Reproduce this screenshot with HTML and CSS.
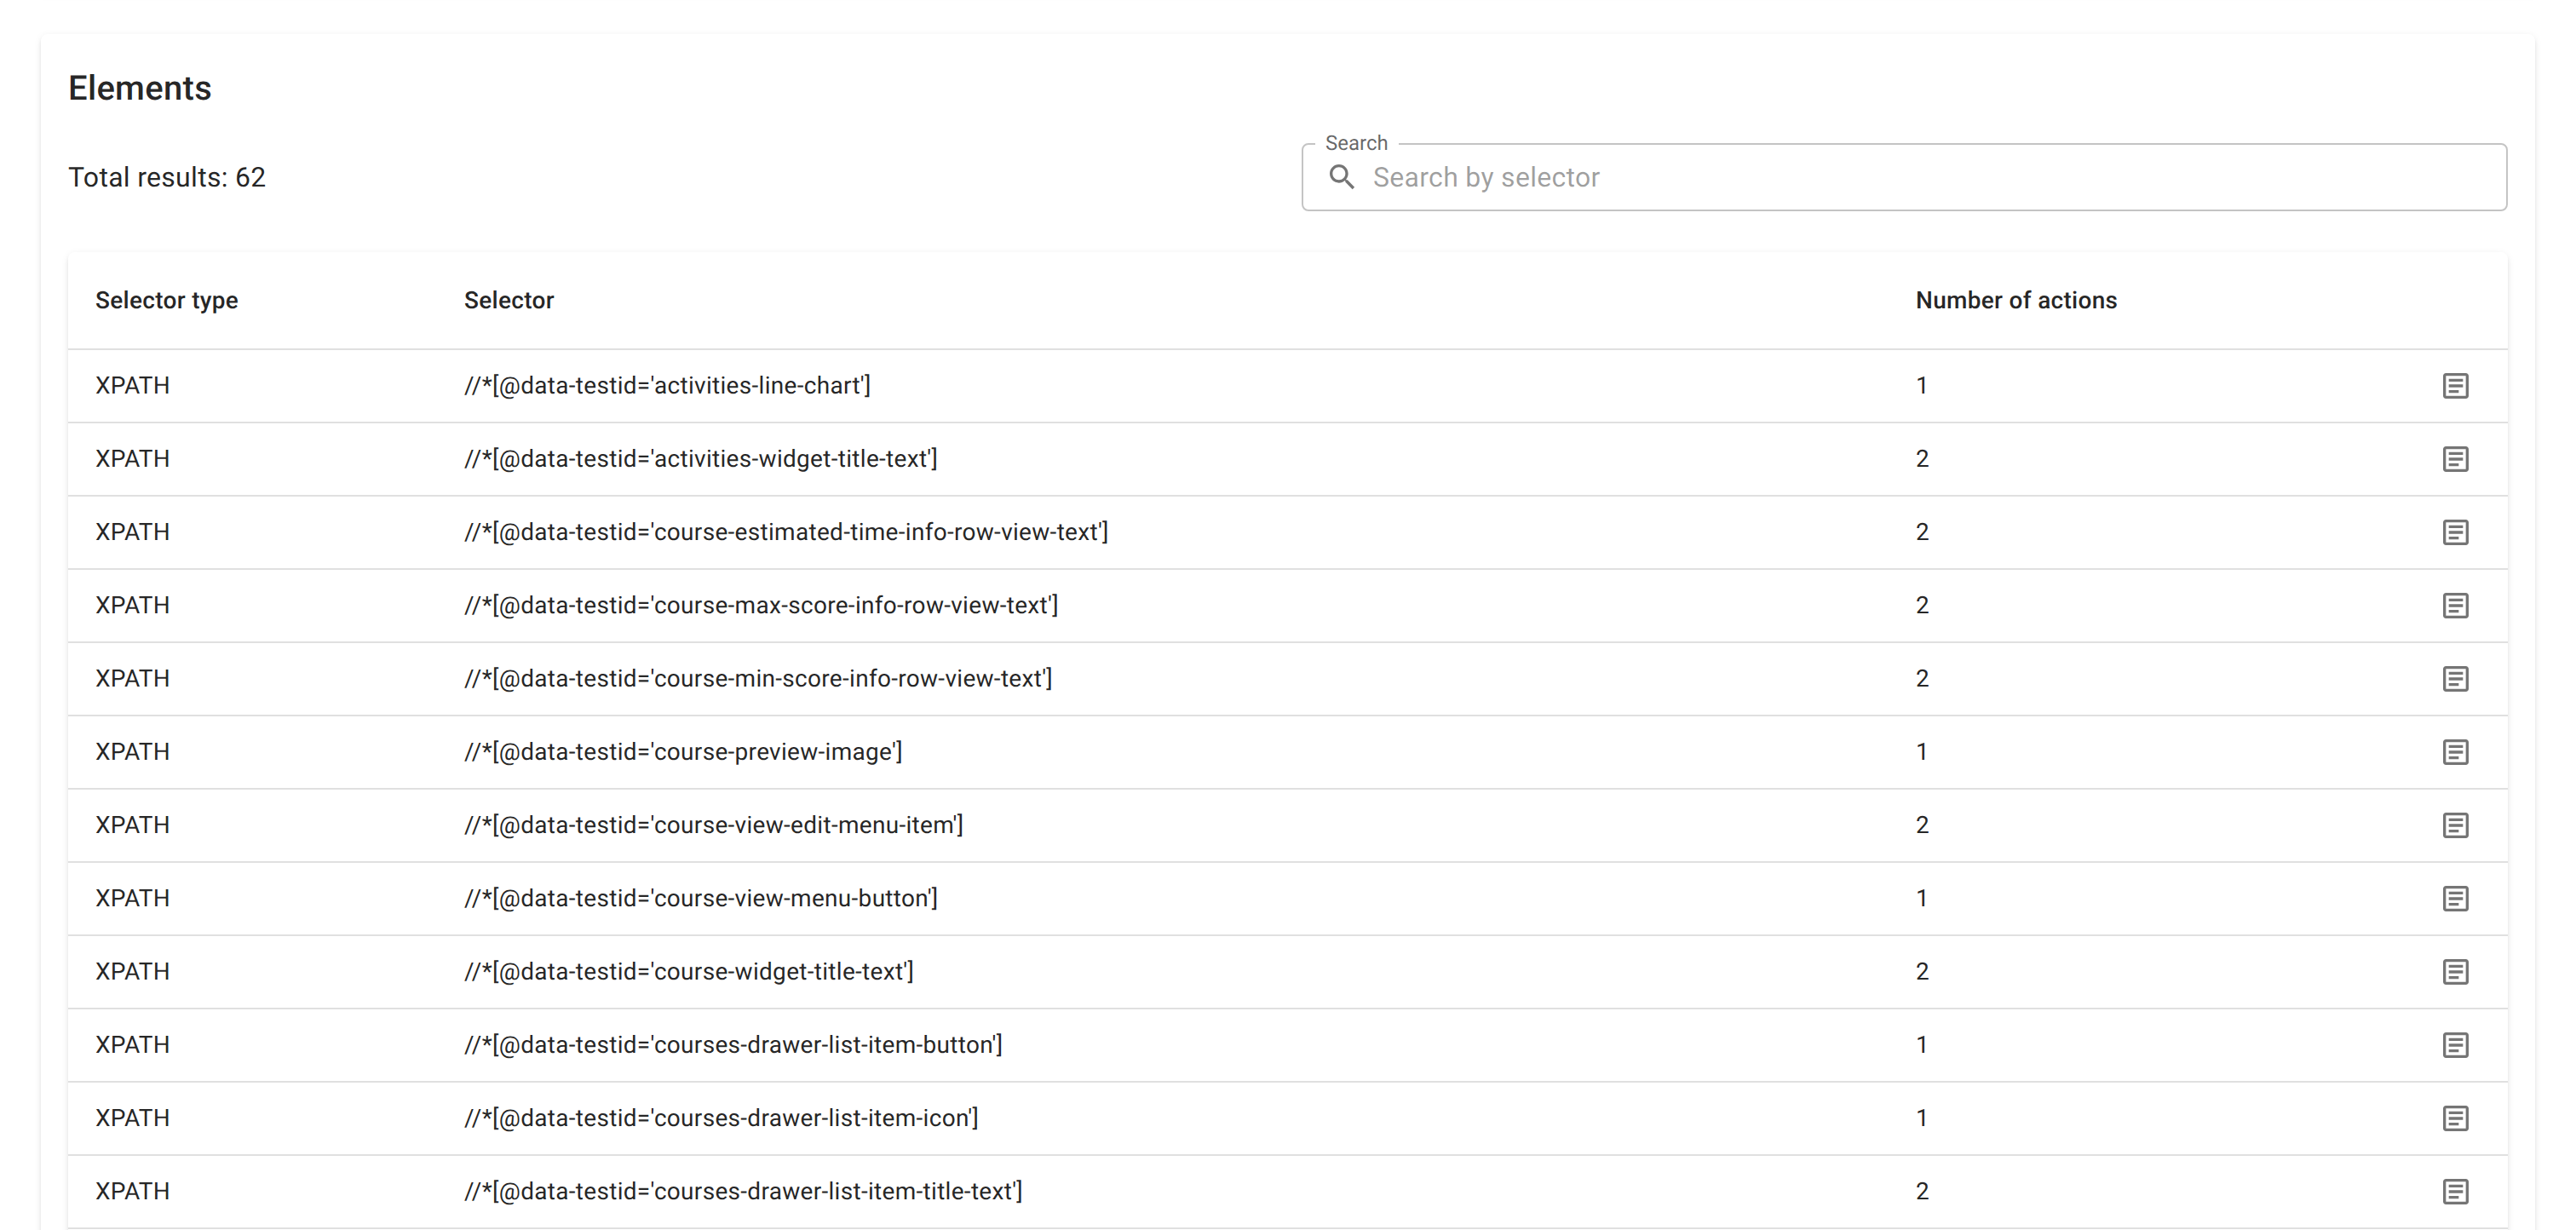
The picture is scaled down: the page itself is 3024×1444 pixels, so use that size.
FILE: index.html
```html
<!DOCTYPE html>
<html lang="en">
<head>
<meta charset="utf-8">
<title>Elements</title>
<link rel="stylesheet" href="styles.css">
</head>
<body>
<div class="card-above"></div>
<main class="card">
  <h1 class="title">Elements</h1>
  <div class="toolbar">
    <p class="total">Total results: 62</p>
    <div class="search">
      <span class="search-label">Search</span>
      <svg class="search-icon" viewBox="0 0 24 24"><path d="M15.5 14h-.79l-.28-.27C15.41 12.59 16 11.11 16 9.5 16 5.91 13.09 3 9.5 3S3 5.91 3 9.5 5.91 16 9.5 16c1.61 0 3.09-.59 4.23-1.57l.27.28v.79l5 4.99L20.49 19l-4.99-5zm-6 0C7.01 14 5 11.99 5 9.5S7.01 5 9.5 5 14 7.01 14 9.5 11.99 14 9.5 14z"/></svg>
      <span class="search-placeholder">Search by selector</span>
    </div>
  </div>
  <div class="table-card">
    <table class="table">
      <thead>
        <tr><th class="col-type">Selector type</th><th class="col-sel">Selector</th><th class="col-num">Number of actions</th><th class="col-act"></th></tr>
      </thead>
      <tbody>
        <tr><td>XPATH</td><td>//*[@data-testid='activities-line-chart']</td><td>1</td><td class="act"><svg class="doc" viewBox="0 0 24 24"><path d="M19 5v14H5V5h14m0-2H5c-1.1 0-2 .9-2 2v14c0 1.1.9 2 2 2h14c1.1 0 2-.9 2-2V5c0-1.1-.9-2-2-2z"/><path d="M14 17H7v-2h7v2zm3-4H7v-2h10v2zm0-4H7V7h10v2z"/></svg></td></tr>
        <tr><td>XPATH</td><td>//*[@data-testid='activities-widget-title-text']</td><td>2</td><td class="act"><svg class="doc" viewBox="0 0 24 24"><path d="M19 5v14H5V5h14m0-2H5c-1.1 0-2 .9-2 2v14c0 1.1.9 2 2 2h14c1.1 0 2-.9 2-2V5c0-1.1-.9-2-2-2z"/><path d="M14 17H7v-2h7v2zm3-4H7v-2h10v2zm0-4H7V7h10v2z"/></svg></td></tr>
        <tr><td>XPATH</td><td>//*[@data-testid='course-estimated-time-info-row-view-text']</td><td>2</td><td class="act"><svg class="doc" viewBox="0 0 24 24"><path d="M19 5v14H5V5h14m0-2H5c-1.1 0-2 .9-2 2v14c0 1.1.9 2 2 2h14c1.1 0 2-.9 2-2V5c0-1.1-.9-2-2-2z"/><path d="M14 17H7v-2h7v2zm3-4H7v-2h10v2zm0-4H7V7h10v2z"/></svg></td></tr>
        <tr><td>XPATH</td><td>//*[@data-testid='course-max-score-info-row-view-text']</td><td>2</td><td class="act"><svg class="doc" viewBox="0 0 24 24"><path d="M19 5v14H5V5h14m0-2H5c-1.1 0-2 .9-2 2v14c0 1.1.9 2 2 2h14c1.1 0 2-.9 2-2V5c0-1.1-.9-2-2-2z"/><path d="M14 17H7v-2h7v2zm3-4H7v-2h10v2zm0-4H7V7h10v2z"/></svg></td></tr>
        <tr><td>XPATH</td><td>//*[@data-testid='course-min-score-info-row-view-text']</td><td>2</td><td class="act"><svg class="doc" viewBox="0 0 24 24"><path d="M19 5v14H5V5h14m0-2H5c-1.1 0-2 .9-2 2v14c0 1.1.9 2 2 2h14c1.1 0 2-.9 2-2V5c0-1.1-.9-2-2-2z"/><path d="M14 17H7v-2h7v2zm3-4H7v-2h10v2zm0-4H7V7h10v2z"/></svg></td></tr>
        <tr><td>XPATH</td><td>//*[@data-testid='course-preview-image']</td><td>1</td><td class="act"><svg class="doc" viewBox="0 0 24 24"><path d="M19 5v14H5V5h14m0-2H5c-1.1 0-2 .9-2 2v14c0 1.1.9 2 2 2h14c1.1 0 2-.9 2-2V5c0-1.1-.9-2-2-2z"/><path d="M14 17H7v-2h7v2zm3-4H7v-2h10v2zm0-4H7V7h10v2z"/></svg></td></tr>
        <tr><td>XPATH</td><td>//*[@data-testid='course-view-edit-menu-item']</td><td>2</td><td class="act"><svg class="doc" viewBox="0 0 24 24"><path d="M19 5v14H5V5h14m0-2H5c-1.1 0-2 .9-2 2v14c0 1.1.9 2 2 2h14c1.1 0 2-.9 2-2V5c0-1.1-.9-2-2-2z"/><path d="M14 17H7v-2h7v2zm3-4H7v-2h10v2zm0-4H7V7h10v2z"/></svg></td></tr>
        <tr><td>XPATH</td><td>//*[@data-testid='course-view-menu-button']</td><td>1</td><td class="act"><svg class="doc" viewBox="0 0 24 24"><path d="M19 5v14H5V5h14m0-2H5c-1.1 0-2 .9-2 2v14c0 1.1.9 2 2 2h14c1.1 0 2-.9 2-2V5c0-1.1-.9-2-2-2z"/><path d="M14 17H7v-2h7v2zm3-4H7v-2h10v2zm0-4H7V7h10v2z"/></svg></td></tr>
        <tr><td>XPATH</td><td>//*[@data-testid='course-widget-title-text']</td><td>2</td><td class="act"><svg class="doc" viewBox="0 0 24 24"><path d="M19 5v14H5V5h14m0-2H5c-1.1 0-2 .9-2 2v14c0 1.1.9 2 2 2h14c1.1 0 2-.9 2-2V5c0-1.1-.9-2-2-2z"/><path d="M14 17H7v-2h7v2zm3-4H7v-2h10v2zm0-4H7V7h10v2z"/></svg></td></tr>
        <tr><td>XPATH</td><td>//*[@data-testid='courses-drawer-list-item-button']</td><td>1</td><td class="act"><svg class="doc" viewBox="0 0 24 24"><path d="M19 5v14H5V5h14m0-2H5c-1.1 0-2 .9-2 2v14c0 1.1.9 2 2 2h14c1.1 0 2-.9 2-2V5c0-1.1-.9-2-2-2z"/><path d="M14 17H7v-2h7v2zm3-4H7v-2h10v2zm0-4H7V7h10v2z"/></svg></td></tr>
        <tr><td>XPATH</td><td>//*[@data-testid='courses-drawer-list-item-icon']</td><td>1</td><td class="act"><svg class="doc" viewBox="0 0 24 24"><path d="M19 5v14H5V5h14m0-2H5c-1.1 0-2 .9-2 2v14c0 1.1.9 2 2 2h14c1.1 0 2-.9 2-2V5c0-1.1-.9-2-2-2z"/><path d="M14 17H7v-2h7v2zm3-4H7v-2h10v2zm0-4H7V7h10v2z"/></svg></td></tr>
        <tr><td>XPATH</td><td>//*[@data-testid='courses-drawer-list-item-title-text']</td><td>2</td><td class="act"><svg class="doc" viewBox="0 0 24 24"><path d="M19 5v14H5V5h14m0-2H5c-1.1 0-2 .9-2 2v14c0 1.1.9 2 2 2h14c1.1 0 2-.9 2-2V5c0-1.1-.9-2-2-2z"/><path d="M14 17H7v-2h7v2zm3-4H7v-2h10v2zm0-4H7V7h10v2z"/></svg></td></tr>
      </tbody>
    </table>
  </div>
</main>
</body>
</html>
```
FILE: styles.css
```css
html, body {
  margin: 0;
  height: 1444px;
  overflow: hidden;
  background: #fff;
}
body {
  padding: 0 48px;
  box-sizing: border-box;
  font-family: Roboto, "Liberation Sans", sans-serif;
  color: rgba(0, 0, 0, 0.87);
  text-rendering: geometricPrecision;
}
.card-above {
  height: 8px;
  margin-top: -16px;
  margin-bottom: 48px;
  border-radius: 8px;
  box-shadow: 0 4px 2px -2px rgba(0,0,0,.12), 0 4px 4px 0 rgba(0,0,0,.08), 0 2px 10px 0 rgba(0,0,0,.07);
}
.card {
  background: #fff;
  border-radius: 8px;
  padding: 32px;
  box-shadow: 0 4px 2px -2px rgba(0,0,0,.12), 0 4px 4px 0 rgba(0,0,0,.08), 0 2px 10px 0 rgba(0,0,0,.07);
}
.title {
  margin: 0;
  font-size: 40px;
  font-weight: 500;
  line-height: 64px;
  letter-spacing: 0.3px;
}
.toolbar {
  display: flex;
  align-items: center;
  justify-content: space-between;
  margin-top: 32px;
}
.total {
  margin: 0;
  font-size: 32px;
  line-height: 48px;
  letter-spacing: 0.3px;
}
.search {
  position: relative;
  box-sizing: border-box;
  width: 1416px;
  height: 80px;
  display: flex;
  align-items: center;
  padding-left: 26px;
  border: 2px solid rgba(0, 0, 0, 0.23);
  border-radius: 8px;
}
.search-label {
  position: absolute;
  left: 14px;
  top: -14px;
  padding: 0 12px;
  background: #fff;
  font-size: 24px;
  line-height: 24px;
  color: rgba(0, 0, 0, 0.6);
}
.search-icon {
  width: 40px;
  height: 40px;
  fill: rgba(0, 0, 0, 0.54);
}
.search-placeholder {
  margin-left: 16px;
  font-size: 32px;
  color: rgba(0, 0, 0, 0.38);
  letter-spacing: 0.3px;
}
.table-card {
  margin-top: 48px;
  padding-bottom: 40px;
  border-radius: 8px;
  box-shadow: 0 4px 2px -2px rgba(0,0,0,.12), 0 4px 4px 0 rgba(0,0,0,.08), 0 2px 10px 0 rgba(0,0,0,.07);
}
.table {
  width: 100%;
  border-collapse: collapse;
  table-layout: fixed;
  font-size: 28px;
}
.col-type { width: 369px; }
.col-sel { width: 1640px; }
.col-act { width: 140px; }
th {
  height: 113px;
  padding: 0 32px;
  text-align: left;
  font-weight: 500;
  line-height: 44px;
  letter-spacing: 0.3px;
  border-bottom: 2px solid #e0e0e0;
}
td {
  height: 84px;
  padding: 0 32px;
  line-height: 40px;
  border-bottom: 2px solid #e0e0e0;
  letter-spacing: 0.3px;
}
.act {
  padding: 0 41px 0 0;
  text-align: right;
}
.doc {
  display: block;
  width: 40px;
  height: 40px;
  margin-left: auto;
  fill: rgba(0, 0, 0, 0.54);
}
```
